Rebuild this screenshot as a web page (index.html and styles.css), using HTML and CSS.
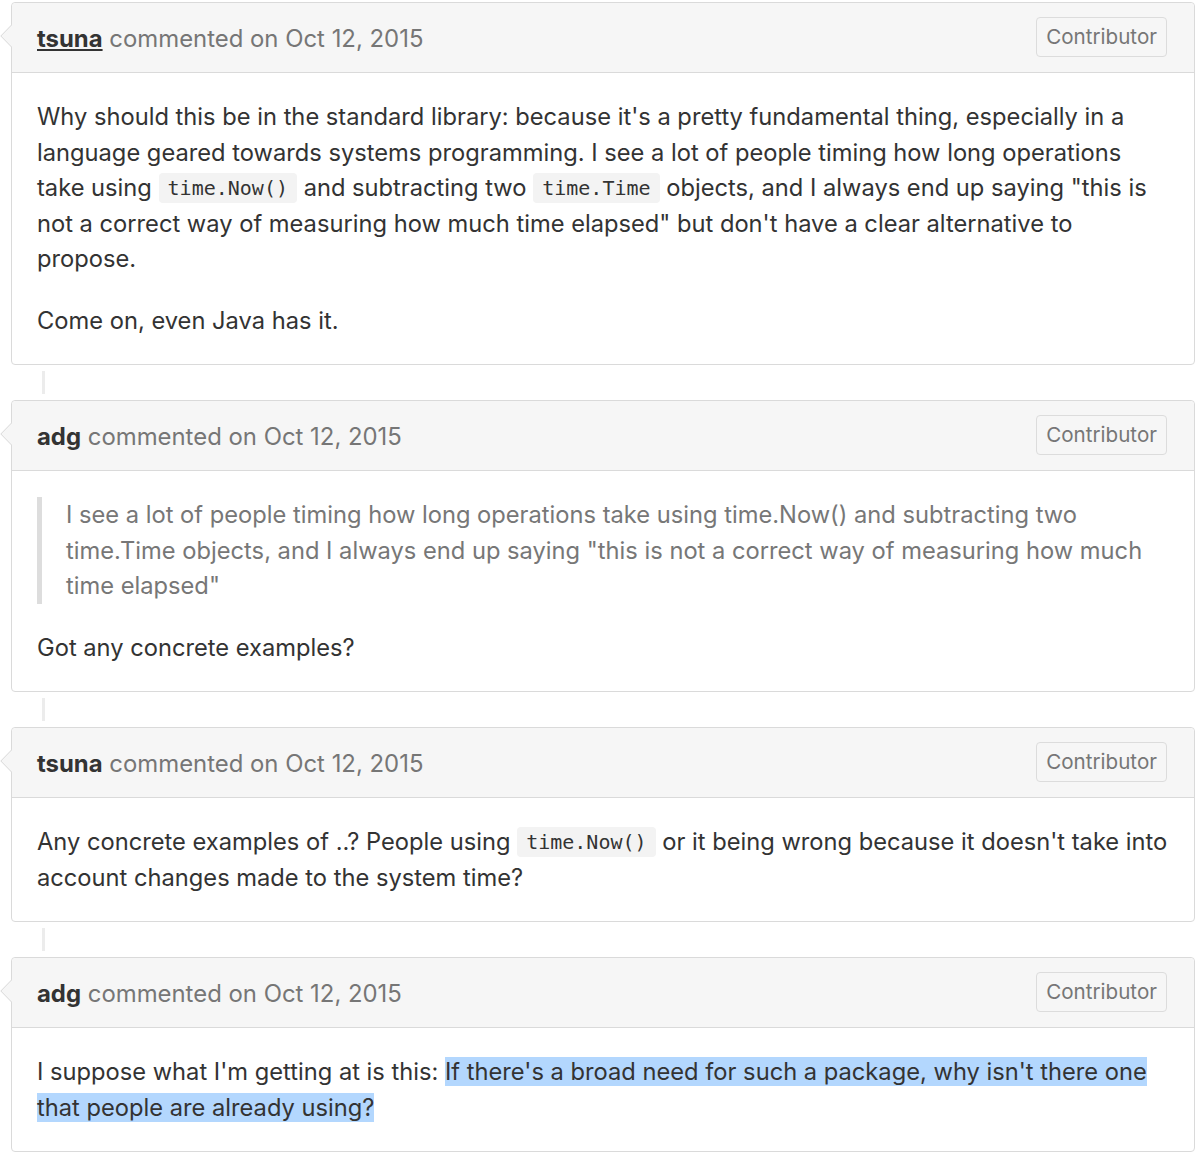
FILE: index.html
```html
<!DOCTYPE html>
<html>
<head>
<meta charset="utf-8">
<link rel="stylesheet" href="styles.css">
</head>
<body>
<div class="timeline">
  <div class="comment">
    <svg class="caret" width="12" height="24" viewBox="0 0 12 24"><path d="M12 0.5 L0.8 12 L12 23.5" fill="#f6f6f6" stroke="#d8d8d8" stroke-width="1"/></svg>
    <div class="comment-header">
      <span class="meta"><a class="author underline">tsuna</a> commented on Oct 12, 2015</span>
      <span class="badge">Contributor</span>
    </div>
    <div class="comment-body">
      <p>Why should this be in the standard library: because it's a pretty fundamental thing, especially in a language geared towards systems programming. I see a lot of people timing how long operations take using <code>time.Now()</code> and subtracting two <code>time.Time</code> objects, and I always end up saying "this is not a correct way of measuring how much time elapsed" but don't have a clear alternative to propose.</p>
      <p>Come on, even Java has it.</p>
    </div>
  </div>
  <div class="connector"></div>
  <div class="comment">
    <svg class="caret" width="12" height="24" viewBox="0 0 12 24"><path d="M12 0.5 L0.8 12 L12 23.5" fill="#f6f6f6" stroke="#d8d8d8" stroke-width="1"/></svg>
    <div class="comment-header">
      <span class="meta"><a class="author">adg</a> commented on Oct 12, 2015</span>
      <span class="badge">Contributor</span>
    </div>
    <div class="comment-body">
      <blockquote><p>I see a lot of people timing how long operations take using time.Now() and subtracting two time.Time objects, and I always end up saying "this is not a correct way of measuring how much time elapsed"</p></blockquote>
      <p>Got any concrete examples?</p>
    </div>
  </div>
  <div class="connector"></div>
  <div class="comment">
    <svg class="caret" width="12" height="24" viewBox="0 0 12 24"><path d="M12 0.5 L0.8 12 L12 23.5" fill="#f6f6f6" stroke="#d8d8d8" stroke-width="1"/></svg>
    <div class="comment-header">
      <span class="meta"><a class="author">tsuna</a> commented on Oct 12, 2015</span>
      <span class="badge">Contributor</span>
    </div>
    <div class="comment-body">
      <p>Any concrete examples of ..? People using <code>time.Now()</code> or it being wrong because it doesn't take into account changes made to the system time?</p>
    </div>
  </div>
  <div class="connector"></div>
  <div class="comment">
    <svg class="caret" width="12" height="24" viewBox="0 0 12 24"><path d="M12 0.5 L0.8 12 L12 23.5" fill="#f6f6f6" stroke="#d8d8d8" stroke-width="1"/></svg>
    <div class="comment-header">
      <span class="meta"><a class="author">adg</a> commented on Oct 12, 2015</span>
      <span class="badge">Contributor</span>
    </div>
    <div class="comment-body">
      <p>I suppose what I'm getting at is this: <span class="selected">If there's a broad need for such a package, why isn't there one that people are already using?</span></p>
    </div>
  </div>
</div>
</body>
</html>
```

FILE: styles.css
```css
html, body {
  margin: 0;
  padding: 0;
  background: #fff;
}
body {
  font-family: Inter, "Liberation Sans", Arial, sans-serif;
  color: #333;
  font-size: 23.7px;
}
.timeline {
  padding: 2px 5px 0 11px;
}
.comment {
  position: relative;
  border: 1px solid #dadada;
  border-radius: 4px;
  background: #fff;
}
.caret {
  position: absolute;
  left: -12px;
  top: 21px;
}
.comment-header {
  height: 69px;
  display: flex;
  align-items: center;
  justify-content: space-between;
  padding: 0 27px 0 25px;
  background: #f6f6f6;
  border-bottom: 1px solid #dadada;
  border-radius: 4px 4px 0 0;
  color: #767676;
  font-size: 23.9px;
}
.meta {
  padding-top: 2px;
}
.author {
  font-weight: bold;
  color: #333;
}
.author.underline {
  text-decoration: underline;
}
.badge {
  box-sizing: border-box;
  height: 40px;
  display: flex;
  align-items: center;
  padding: 0 9px;
  border: 1px solid #dcdcdc;
  border-radius: 4px;
  font-size: 20.6px;
  color: #767676;
  margin-top: -2px;
}
.comment-body {
  padding: 26px 26px 26px 25px;
  line-height: 35.5px;
}
.comment-body p {
  margin: 0 0 26px;
}
.comment-body > :last-child,
blockquote p {
  margin-bottom: 0;
}
code {
  display: inline-block;
  font-family: "DejaVu Sans Mono", "Liberation Mono", monospace;
  font-size: 20px;
  line-height: 30px;
  background: #f3f3f3;
  border-radius: 4px;
  padding: 0 9px;
  vertical-align: 1px;
}
blockquote {
  margin: 0 0 26px;
  padding: 0 0 0 24px;
  border-left: 5px solid #dddddd;
  color: #777;
}
.selected {
  background: #b3d7fe;
}
.connector {
  height: 23px;
  width: 3px;
  margin: 6px 0 6px 31px;
  background: #ececec;
}
```
